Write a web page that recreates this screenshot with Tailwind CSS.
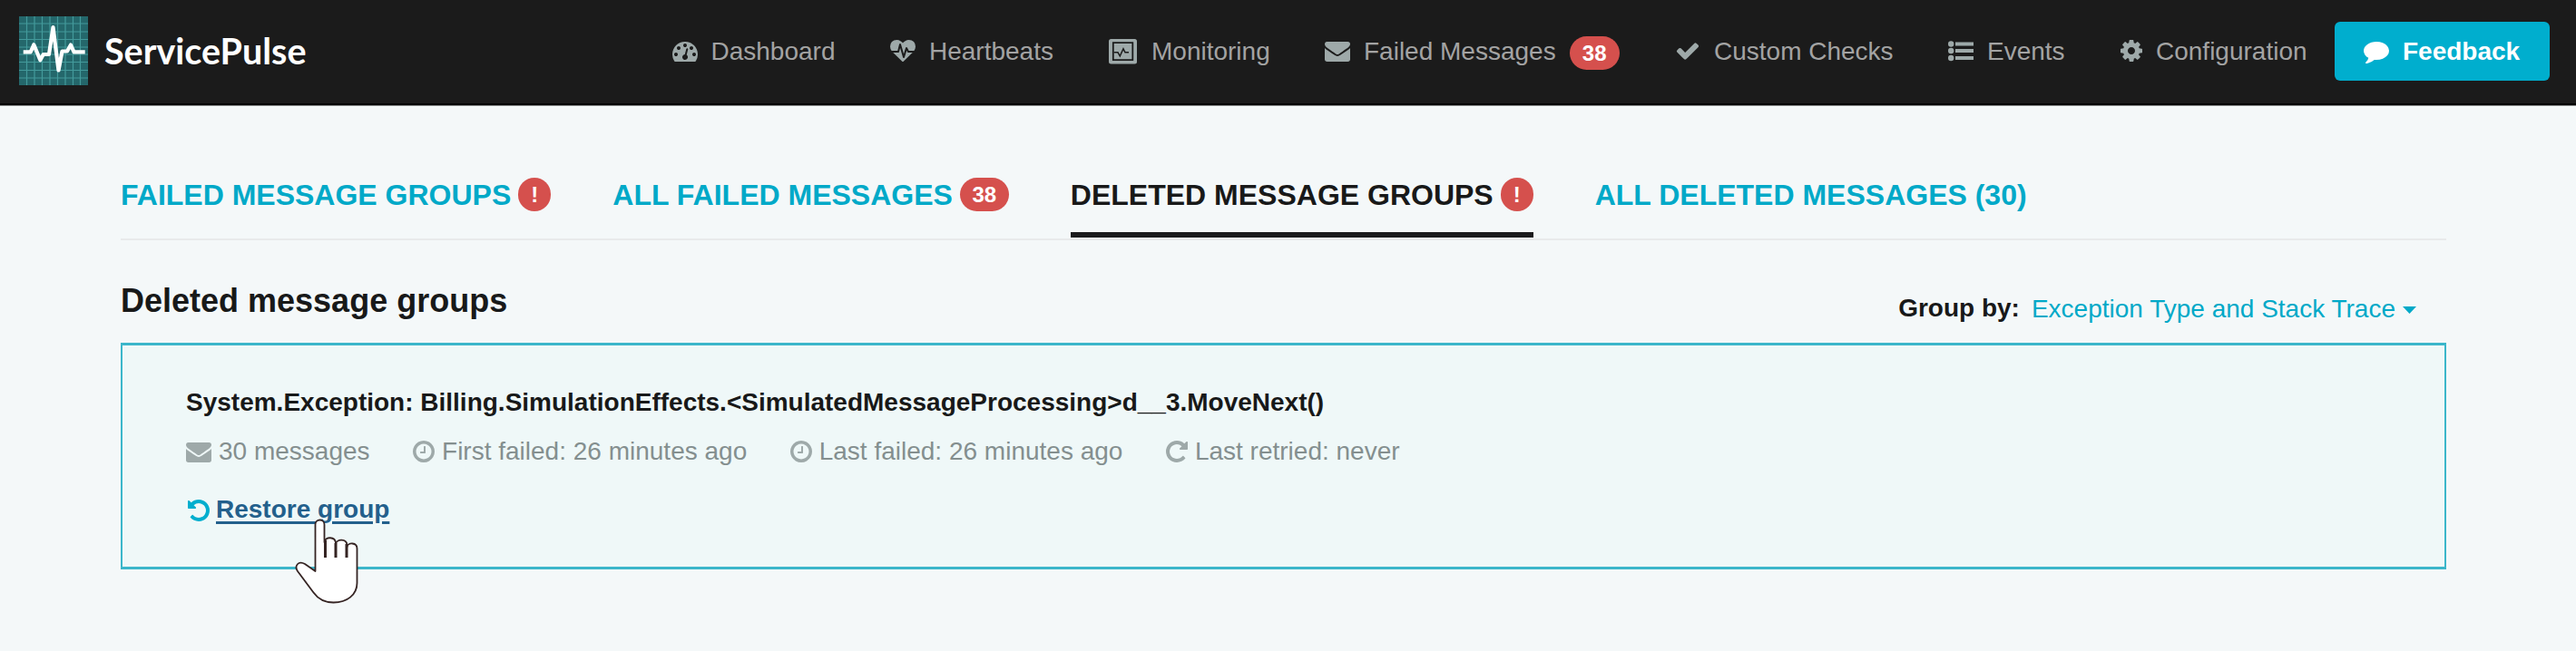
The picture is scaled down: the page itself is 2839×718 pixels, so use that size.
<!DOCTYPE html>
<html lang="en">
<head>
<meta charset="utf-8">
<title>ServicePulse</title>
<script src="https://cdn.jsdelivr.net/npm/@tailwindcss/browser@4"></script>
</head>
<body class="h-[718px] w-[2839px] overflow-hidden bg-[#f4f8f9] font-['Liberation_Sans',Arial,sans-serif] text-[28px] leading-10 text-[#181919]">
<svg class="hidden">
  <symbol id="tachometer" viewBox="0 0 1792 1792"><path d="M384 1152q0-53-37.5-90.5t-90.5-37.5-90.5 37.5-37.5 90.5 37.5 90.5 90.5 37.5 90.5-37.5 37.5-90.5zm192-448q0-53-37.5-90.5t-90.5-37.5-90.5 37.5-37.5 90.5 37.5 90.5 90.5 37.5 90.5-37.5 37.5-90.5zm428 481l101-382q6-26-7.5-48.5t-38.5-29.5-48 6.5-30 39.5l-101 382q-60 5-107 43.5t-63 98.5q-20 77 20 146t117 89 146-20 89-117q16-60-6-117t-72-91zm660-33q0-53-37.5-90.5t-90.5-37.5-90.5 37.5-37.5 90.5 37.5 90.5 90.5 37.5 90.5-37.5 37.5-90.5zm-640-640q0-53-37.5-90.5t-90.5-37.5-90.5 37.5-37.5 90.5 37.5 90.5 90.5 37.5 90.5-37.5 37.5-90.5zm448 192q0-53-37.5-90.5t-90.5-37.5-90.5 37.5-37.5 90.5 37.5 90.5 90.5 37.5 90.5-37.5 37.5-90.5zm320 448q0 261-141 483-19 29-54 29h-1402q-35 0-54-29-141-221-141-483 0-182 71-348t191-286 286-191 348-71 348 71 286 191 191 286 71 348z"/></symbol>
  <symbol id="heartbeat" viewBox="0 0 1792 1792"><path d="M1280 896h305q-5 6-10 10.5t-9 7.5l-3 4-623 600q-18 18-44 18t-44-18l-624-602q-5-2-21-20h369q22 0 39.5-13.5t22.5-34.5l70-281 190 667q6 20 23 33t39 13q21 0 38-13t23-33l146-485 56 112q18 35 57 35zm512-428q0 145-103 300h-369l-111-221q-8-17-25.5-27t-36.5-8q-45 5-56 46l-129 430-196-686q-6-20-23.5-33t-39.5-13-39 13.5-22 34.5l-116 464h-423q-103-155-103-300 0-220 127-344t351-124q62 0 126.5 21.5t120 58 95.5 68.5 76 68q36-36 76-68t95.5-68.5 120-58 126.5-21.5q224 0 351 124t127 344z"/></symbol>
  <symbol id="envelope" viewBox="0 0 1792 1792"><path d="M1792 710v794q0 66-47 113t-113 47h-1472q-66 0-113-47t-47-113v-794q44 49 101 87 362 246 497 345 57 42 92.500 65.500t94.500 48 110 24.500h2q51 0 110-24.500t94.500-48 92.500-65.500q170-123 498-345 57-39 100-87zm0-294q0 79-49 151t-122 123q-376 261-468 325-10 7-42.500 31t-54 38.500-52 32.500-57.500 27-50 9h-2q-23 0-50-9t-57.500-27-52-32.500-54-38.500-42.500-31q-91-64-262-182.500t-205-142.500q-62-42-117-115.500t-55-136.500q0-78 41.500-130t118.500-52h1472q65 0 112.500 47t47.500 113z"/></symbol>
  <symbol id="check" viewBox="0 0 1792 1792"><path d="M1671 566q0 40-28 68l-724 724-136 136q-28 28-68 28t-68-28l-136-136-362-362q-28-28-28-68t28-68l136-136q28-28 68-28t68 28l294 295 656-657q28-28 68-28t68 28l136 136q28 28 28 68z"/></symbol>
  <symbol id="cog" viewBox="0 0 1792 1792"><path d="M1152 896q0-106-75-181t-181-75-181 75-75 181 75 181 181 75 181-75 75-181zm512-109v222q0 12-8 23t-20 13l-185 28q-19 54-39 91 35 50 107 138 10 12 10 25t-9 23q-27 37-99 108t-94 71q-12 0-26-9l-138-108q-44 23-91 38-16 136-29 186-7 28-36 28h-222q-14 0-24.500-8.500t-11.500-21.500l-28-184q-49-16-90-37l-141 107q-10 9-25 9-14 0-25-11-126-114-165-168-7-10-7-23 0-12 8-23 15-21 51-66.500t54-70.500q-27-50-41-99l-183-27q-13-2-21-12.500t-8-23.500v-222q0-12 8-23t19-13l186-28q14-46 39-92-40-57-107-138-10-12-10-24 0-10 9-23 26-36 98.500-107.500t94.500-71.500q13 0 26 10l138 107q44-23 91-38 16-136 29-186 7-28 36-28h222q14 0 24.500 8.500t11.500 21.500l28 184q49 16 90 37l142-107q9-9 24-9 13 0 25 10 129 119 165 170 7 8 7 22 0 12-8 23-15 21-51 66.500t-54 70.500q26 50 41 98l183 28q13 2 21 12.500t8 23.500z"/></symbol>
  <symbol id="comment" viewBox="0 0 1792 1792"><path d="M1792 896q0 174-120 321.500t-326 233-450 85.500q-70 0-145-8-198 175-460 242-49 14-114 22-17 2-30.500-9t-17.500-29v-1q-3-4-.5-12t2-10 4.500-9.500l6-9 7-8.500 8-9q7-8 31-34.500t34.500-38 31-39.500 32.500-51 27-59 26-76q-157-89-247.500-220t-90.500-281q0-130 71-248.500t191-204.500 286-136.500 348-50.500q244 0 450 85.500t326 233 120 321.500z"/></symbol>
  <symbol id="clock" viewBox="0 0 1792 1792"><path d="M1024 544v448q0 14-9 23t-23 9h-320q-14 0-23-9t-9-23v-64q0-14 9-23t23-9h224v-352q0-14 9-23t23-9h64q14 0 23 9t9 23zm416 352q0-148-73-273t-198-198-273-73-273 73-198 198-73 273 73 273 198 198 273 73 273-73 198-198 73-273zm224 0q0 209-103 385.500t-279.500 279.500-385.500 103-385.500-103-279.500-279.500-103-385.500 103-385.500 279.500-279.500 385.500-103 385.500 103 279.500 279.500 103 385.500z"/></symbol>
  <symbol id="repeat" viewBox="0 0 1792 1792"><path d="M1664 256v448q0 26-19 45t-45 19h-448q-42 0-59-40-17-39 14-69l138-138q-148-137-349-137-104 0-198.500 40.500t-163.500 109.500-109.500 163.500-40.500 198.500 40.500 198.500 109.500 163.500 163.500 109.500 198.500 40.500q119 0 225-52t179-147q7-10 23-12 15 0 25 9l137 138q9 8 9.500 20.500t-7.500 22.500q-109 132-264 204.500t-327 72.500q-156 0-298-61t-245-164-164-245-61-298 61-298 164-245 245-164 298-61q147 0 284.500 55.500t244.500 156.500l130-129q29-31 70-14 39 17 39 59z"/></symbol>
  <symbol id="list" viewBox="0 0 28 28"><circle cx="3.200" cy="6.500" r="3.200"/><circle cx="3.200" cy="14" r="3.200"/><circle cx="3.200" cy="22" r="3.200"/><path d="M8 4.500h20.500v4h-20.500zM8 12h20.500v4h-20.500zM8 20h20.500v4h-20.500z"/></symbol>
</svg>

<header class="flex h-[116px] items-start border-b-2 border-black bg-[#1b1b1b] pl-[21px] text-[#a3a3a3] shadow-[0_1px_0_#8a8c8c]">
  <svg class="mt-[18px] size-[76px] shrink-0" viewBox="0 0 76 76">
    <rect width="76" height="76" fill="#24676b"/>
    <path d="M8.500 0v76M17 0v76M25.500 0v76M34 0v76M42.500 0v76M51 0v76M59.500 0v76M67.500 0v76M0 8h76M0 17h76M0 25.500h76M0 34h76M0 42h76M0 50.500h76M0 59.500h76M0 68h76" stroke="#439a9b" stroke-width="1.200"/>
    <path d="M4.700 39.300h8l3.600-8 7 17 3.500-6.300h6.200l4.500-30 6 47.500 4-21h5.500l4-7 3.500 7.800h12.200" fill="none" stroke="#fff" stroke-width="4.200" stroke-linejoin="round"/>
  </svg>
  <div class="ml-[18px] mt-[32px] w-[625.500px] font-['Lato',sans-serif] text-[39.500px] font-bold leading-[48px] text-white">ServicePulse</div>
  <nav class="mt-[37px] flex whitespace-nowrap">
    <a class="flex w-[240.500px] gap-[15px]"><svg class="mt-[5px] size-7 fill-[#9ea9a9]"><use href="#tachometer"/></svg>Dashboard</a>
    <a class="flex w-[241px] gap-[15px]"><svg class="mt-[7px] size-7 fill-[#9ea9a9]"><use href="#heartbeat"/></svg>Heartbeats</a>
    <a class="flex w-[238px] gap-[16px]"><svg class="mt-[6px] h-7 w-[31px]" viewBox="0 0 31 28"><rect width="31" height="27.500" rx="2.500" fill="#9ea9a9"/><path d="M4.800 4.200h21.500v19h-21.500z" fill="none" stroke="#1b1b1b" stroke-width="1.800"/><path d="M5.700 14.800h4.300l2.300 4 3.700-8 2 4h4" fill="none" stroke="#1b1b1b" stroke-width="1.500"/></svg>Monitoring</a>
    <a class="flex w-[386px] gap-[15px]"><svg class="mt-[5px] size-7 fill-[#9ea9a9]"><use href="#envelope"/></svg>Failed Messages<span class="mt-[3px] flex h-[37px] w-[55px] items-center justify-center rounded-full bg-[#d5504d] text-2xl font-bold text-white">38</span></a>
    <a class="flex w-[301px] gap-[15px]"><svg class="mt-[5px] size-7 fill-[#9ea9a9]"><use href="#check"/></svg>Custom Checks</a>
    <a class="flex w-[188px] gap-[15px]"><svg class="mt-[5px] size-7 overflow-visible fill-[#9ea9a9]"><use href="#list"/></svg>Events</a>
    <a class="flex w-[238px] gap-[13px]"><svg class="mt-[5px] size-7 fill-[#9ea9a9]"><use href="#cog"/></svg>Configuration</a>
  </nav>
  <button class="mt-6 flex h-[65px] w-[237px] gap-[15px] rounded-md bg-[#00aece] pl-8 pt-[13px] font-bold text-white"><svg class="mt-[5px] size-7 fill-white"><use href="#comment"/></svg>Feedback</button>
</header>

<main class="mx-[133px] w-[2563px]">
  <nav class="flex h-[149px] gap-[68px] whitespace-nowrap border-b-2 border-[#e8eaeb] pt-[80px] text-[32px] font-bold text-[#00a9c8]">
    <a class="flex h-[66px] gap-[8px]"><span class="-mt-[1px]">FAILED MESSAGE GROUPS</span><span class="flex h-[37px] w-[36px] items-center justify-center rounded-full bg-[#d5504d] text-2xl text-white">!</span></a>
    <a class="flex h-[66px] gap-[8px]"><span class="-mt-[1px]">ALL FAILED MESSAGES</span><span class="flex h-[37px] w-[54px] items-center justify-center rounded-full bg-[#d5504d] text-2xl text-white">38</span></a>
    <a class="flex h-[66px] gap-[8px] border-b-6 border-[#1b1b1d] text-[#181919]"><span class="-mt-[1px]">DELETED MESSAGE GROUPS</span><span class="flex h-[37px] w-[36px] items-center justify-center rounded-full bg-[#d5504d] text-2xl text-white">!</span></a>
    <a class="flex h-[66px]"><span class="-mt-[1px]">ALL DELETED MESSAGES (30)</span></a>
  </nav>

  <div class="flex h-[113px] justify-between pr-[33px]">
    <h1 class="mt-[47px] text-[36px] font-bold">Deleted message groups</h1>
    <div class="mt-[55px] flex items-start gap-[13px]"><b>Group by:</b><a class="mt-px flex gap-2 text-[#00a9c8]">Exception Type and Stack Trace<svg class="mt-[17px] h-[8px] w-[15px] fill-[#00a9c8]" viewBox="0 0 15 8"><path d="M0 0h15l-7.500 8z"/></svg></a></div>
  </div>

  <section class="relative h-[250px] border-x-2 border-y-3 border-[#3bb6ca] bg-[#eff8f8] pl-[70px] pt-[43px]">
    <h2 class="font-bold">System.Exception: Billing.SimulationEffects.&lt;SimulatedMessageProcessing&gt;d__3.MoveNext()</h2>
    <div class="mt-[14px] flex gap-[45.500px] whitespace-nowrap text-[#848f8f]">
      <span class="flex gap-[8px]"><svg class="mt-[5.500px] size-7 fill-[#9ea9a9]"><use href="#envelope"/></svg>30 messages</span>
      <span class="flex gap-[6px]"><svg class="mt-[5.500px] size-7 fill-[#9ea9a9]"><use href="#clock"/></svg>First failed: 26 minutes ago</span>
      <span class="flex gap-[6px]"><svg class="mt-[5.500px] size-7 fill-[#9ea9a9]"><use href="#clock"/></svg>Last failed: 26 minutes ago</span>
      <span class="flex gap-[6px]"><svg class="mt-[5.500px] size-7 fill-[#9ea9a9]"><use href="#repeat"/></svg>Last retried: never</span>
    </div>
    <a class="mt-[24px] flex gap-[5px] font-bold text-[#23608c]"><svg class="mt-[6.500px] size-7 -scale-x-100 fill-[#00aece]"><use href="#repeat"/></svg><span class="underline decoration-[3px] underline-offset-[4px]">Restore group</span></a>
    <svg class="absolute left-[185px] top-[189px] h-[100px] w-[80px]" viewBox="0 0 80 100"><path d="M27.500 60V8.500a5 5 0 0 1 10 0V28c1-6.500 12-6.500 12.500 1v1c1-6 12-6 12.500 1v2c1-5 11-5 11 2V73c0 13-11 21.500-26 21.500-10 0-17-4-22-11L8 60c-4-6 1-12 8-8z" fill="#fff" stroke="#352423" stroke-width="1.800" stroke-linejoin="round"/><path d="M38.500 26v19M50 29v16M62 30v15" stroke="#352423" stroke-width="3"/></svg>
  </section>
</main>
</body>
</html>
